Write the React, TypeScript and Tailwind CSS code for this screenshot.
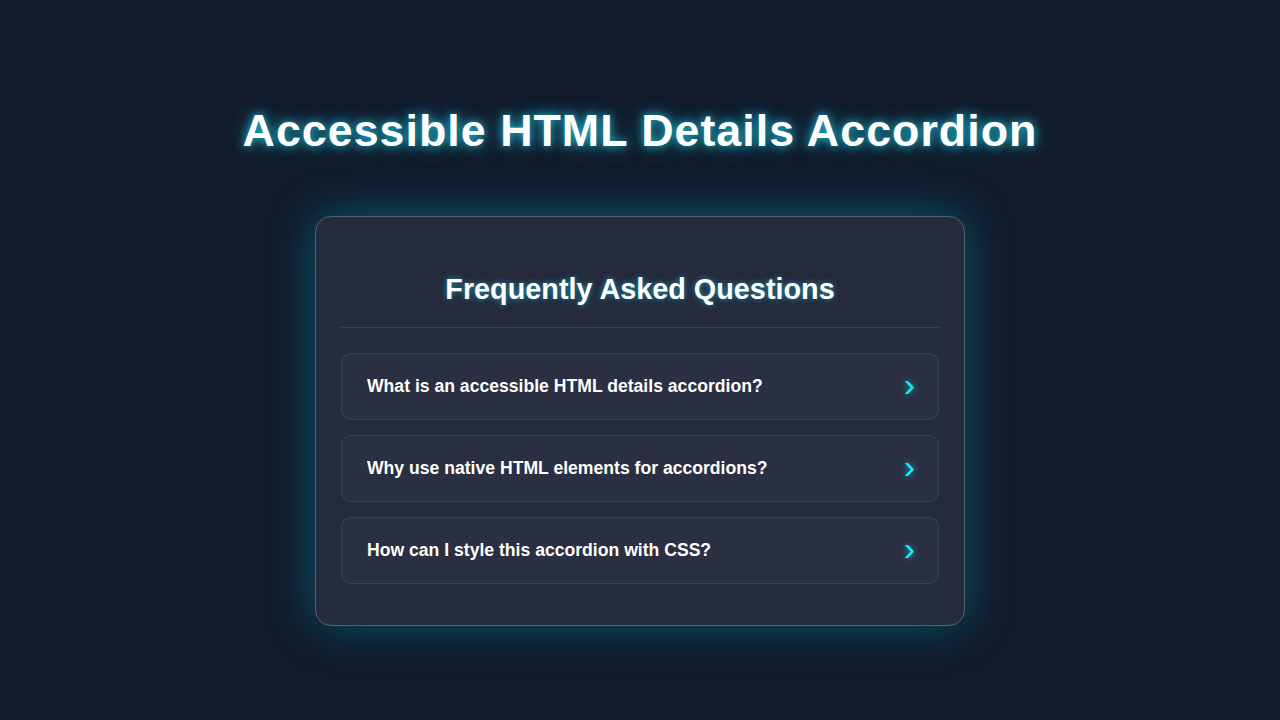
import React from "react";

const questions = [
  "What is an accessible HTML details accordion?",
  "Why use native HTML elements for accordions?",
  "How can I style this accordion with CSS?",
];

export default function App() {
  return (
    <div
      className="min-h-screen w-full bg-[#111a2b] flex flex-col items-center pt-[100px]"
      style={{ fontFamily: '"Liberation Sans", Arial, sans-serif' }}
    >
      <h1 className="text-[44.8px] leading-[60px] font-bold text-white tracking-[1px] [text-shadow:0_0_10px_rgba(34,211,238,0.85),0_0_22px_rgba(34,211,238,0.45)]">
        Accessible HTML Details Accordion
      </h1>
      <div className="mt-[56px] w-[650px] rounded-2xl border border-[#556173] bg-[#252a3c] px-[25px] pt-[55px] pb-[41px] shadow-[0_0_45px_rgba(6,182,212,0.45),0_10px_30px_rgba(0,0,0,0.3)]">
        <h2 className="text-center text-[28.8px] leading-[34px] font-bold text-white [text-shadow:0_0_6px_rgba(34,211,238,0.6)] pb-[21px] border-b border-[#393f50]">
          Frequently Asked Questions
        </h2>
        <div className="mt-[25px] flex flex-col gap-[15px]">
          {questions.map((q) => (
            <div
              key={q}
              className="h-[67px] flex items-center justify-between rounded-[10px] border border-[#3c4254] bg-[#2a2f42] pl-[25px] pr-[23px]"
            >
              <span className="text-[17.6px] font-bold text-white">{q}</span>
              <span className="text-[34px] font-normal leading-none text-[#1ee8f8] [text-shadow:0_0_6px_rgba(34,229,245,0.7)] -mt-[5px]">
                ›
              </span>
            </div>
          ))}
        </div>
      </div>
    </div>
  );
}
